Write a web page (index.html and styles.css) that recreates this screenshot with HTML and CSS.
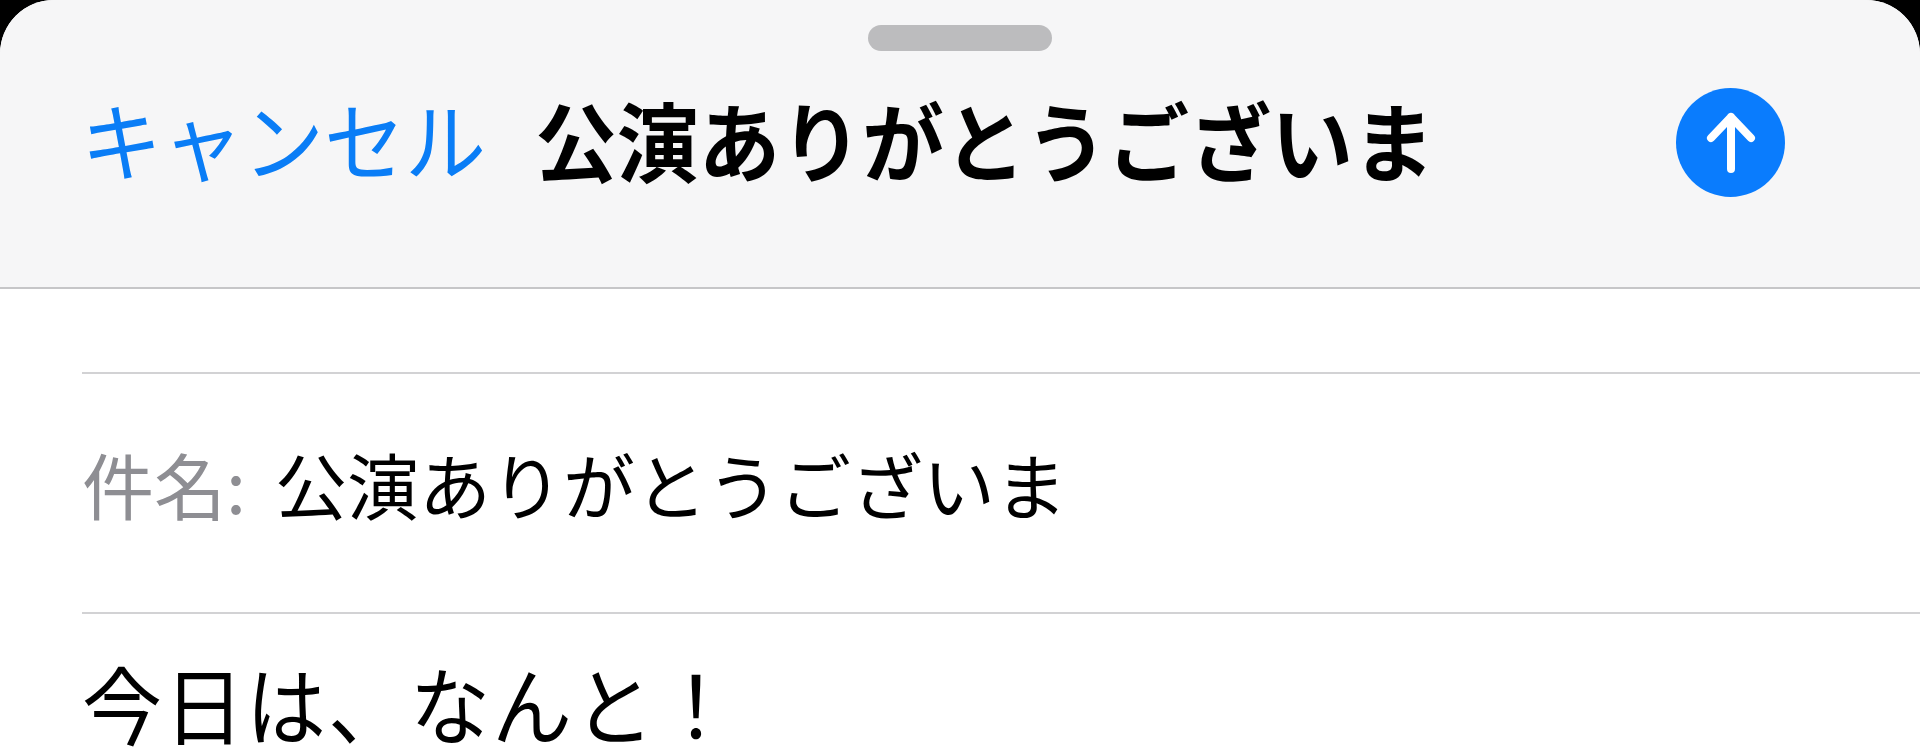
FILE: index.html
```html
<!DOCTYPE html>
<html lang="ja">
<head>
<meta charset="utf-8">
<title>公演ありがとうございま</title>
<link rel="stylesheet" href="styles.css">
</head>
<body>
<main class="sheet">
  <header class="nav">
    <div class="grabber"></div>
    <div class="nav-row">
      <span class="cancel">キャンセル</span>
      <h1 class="title">公演ありがとうございま</h1>
      <button class="send" aria-label="送信">
        <svg class="send-icon" viewBox="0 0 109 109">
          <path d="M35 50 L55 29 L75 50 M55 29 V81"/>
        </svg>
      </button>
    </div>
  </header>
  <section class="form">
    <div class="field field-to"></div>
    <div class="field field-subject">
      <span class="label">件名:</span><span class="value">公演ありがとうございま</span>
    </div>
    <p class="message">今日は、なんと！</p>
  </section>
</main>
</body>
</html>
```

FILE: styles.css
```css
* { box-sizing: border-box; margin: 0; padding: 0; }
html, body { width: 1920px; height: 756px; background: #000; }
body { font-family: "Noto Sans CJK JP", "Liberation Sans", sans-serif; color: #000; }

.sheet {
  width: 1920px;
  height: 756px;
  background: #fff;
  border-radius: 54px 54px 0 0;
}

.nav {
  height: 289px;
  background: #f6f6f7;
  border-bottom: 2px solid #c6c6c8;
  border-radius: 54px 54px 0 0;
  padding-top: 25px;
  display: flex;
  flex-direction: column;
  align-items: center;
}
.grabber {
  width: 184px;
  height: 26px;
  border-radius: 13px;
  background: #bcbcbe;
}
.nav-row {
  width: 100%;
  margin-top: 37px;
  height: 109px;
  padding: 0 135px 0 81px;
  display: flex;
  align-items: center;
}
.cancel {
  font-size: 81px;
  line-height: 99px;
  margin-top: -10px;
  color: #0a7df6;
  white-space: nowrap;
  transform: scaleY(1.06);
}
.title {
  margin-left: 49px;
  margin-top: -9px;
  font-size: 81.8px;
  line-height: 99px;
  font-weight: 700;
  white-space: nowrap;
  transform: scaleY(1.05);
}
.send {
  margin-left: auto;
  width: 109px;
  height: 109px;
  border: 0;
  border-radius: 50%;
  background: #0a7cfd;
  display: block;
  flex: none;
}
.send-icon {
  display: block;
  width: 109px;
  height: 109px;
  fill: none;
  stroke: #fff;
  stroke-width: 8;
  stroke-linecap: round;
  stroke-linejoin: round;
}

.form { padding-left: 82px; }
.field { border-bottom: 2px solid #d2d2d4; }
.field-to { height: 85px; }
.field-subject {
  height: 240px;
  display: flex;
  align-items: center;
  padding-bottom: 21px;
  font-size: 72px;
  line-height: 100px;
  white-space: nowrap;
}
.label { color: #8e8e93; width: 193px; }
.message {
  font-size: 80px;
  letter-spacing: 2px;
  line-height: 100px;
  margin-top: 38px;
  white-space: nowrap;
  transform: scaleY(1.06);
  transform-origin: left center;
}
```
